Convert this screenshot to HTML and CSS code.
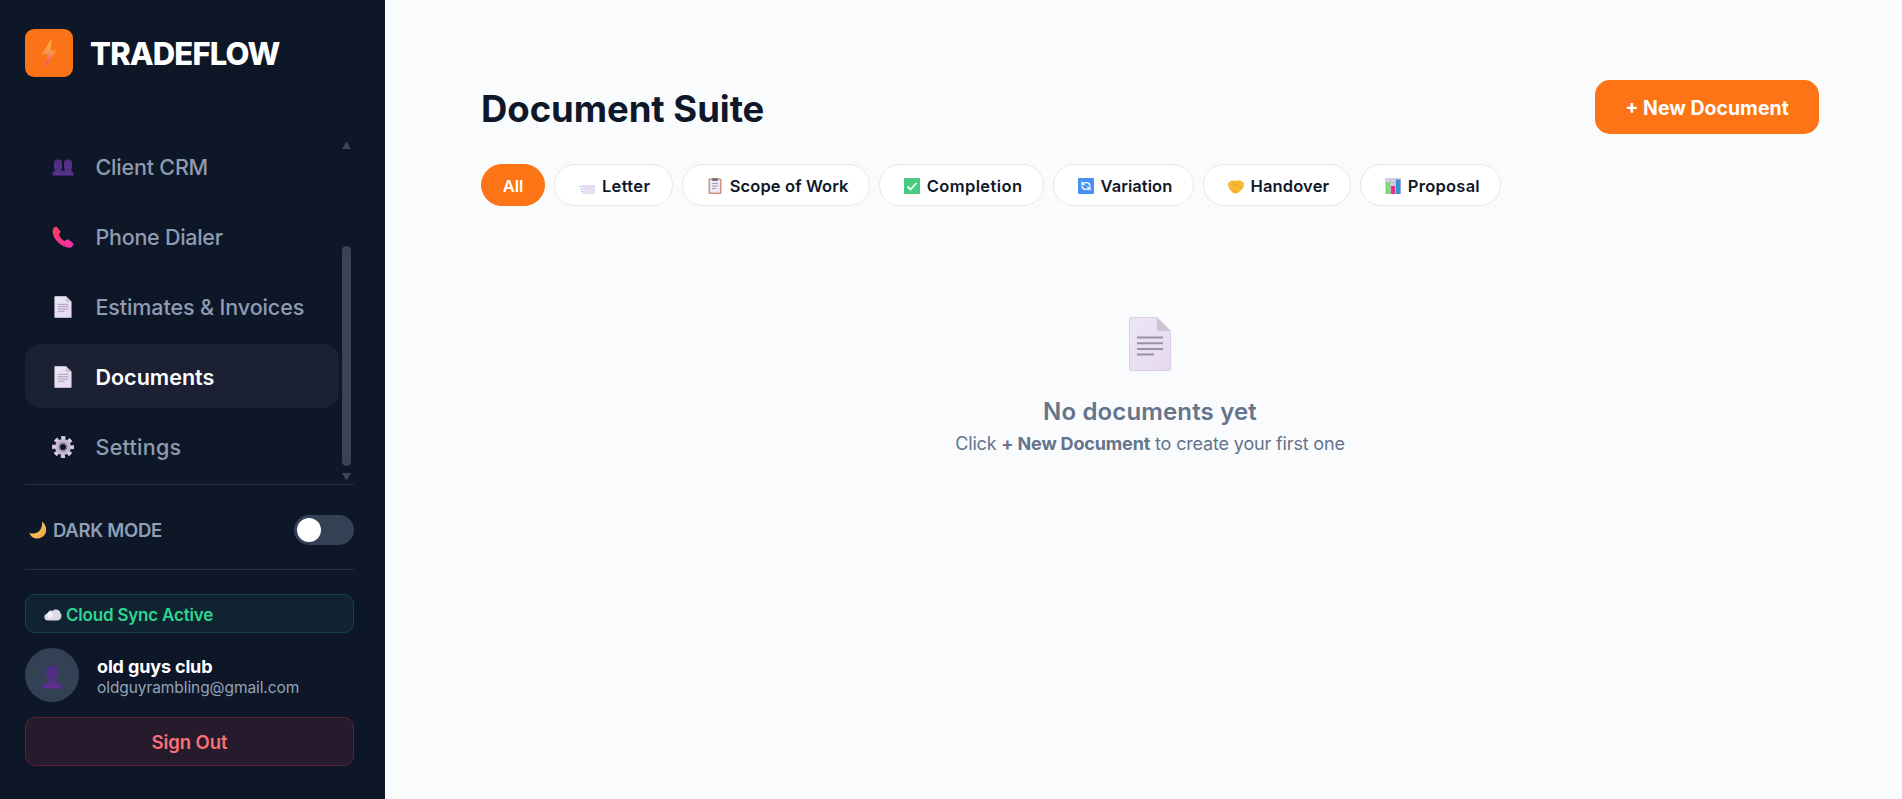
FILE: index.html
```html
<!DOCTYPE html>
<html lang="en">
<head>
    <meta charset="UTF-8">
    <title>TradeFlow - Document Suite</title>
    <link rel="stylesheet" href="styles.css">
</head>
<body>
    <!-- Shared icons -->
    <svg class="sprite" width="0" height="0">
        <defs>
            <linearGradient id="paper" x1="0" y1="0" x2="1" y2="1">
                <stop offset="0" stop-color="#ece7f6"/>
                <stop offset="1" stop-color="#e6d8f0"/>
            </linearGradient>
            <linearGradient id="bolt" x1="0" y1="0" x2="0" y2="1">
                <stop offset="0" stop-color="#ffc531"/>
                <stop offset="0.5" stop-color="#f98f50"/>
                <stop offset="1" stop-color="#f0406e"/>
            </linearGradient>
            <linearGradient id="phone" x1="0" y1="0" x2="1" y2="1">
                <stop offset="0" stop-color="#ff3d55"/>
                <stop offset="1" stop-color="#f02fae"/>
            </linearGradient>
            <linearGradient id="person" x1="0" y1="0" x2="0" y2="1">
                <stop offset="0" stop-color="#4a2f7d"/>
                <stop offset="1" stop-color="#5d2f92"/>
            </linearGradient>
            <linearGradient id="moon" x1="0" y1="0" x2="1" y2="1">
                <stop offset="0" stop-color="#ffd75e"/>
                <stop offset="1" stop-color="#f0a04a"/>
            </linearGradient>
        </defs>
        <symbol id="i-doc" viewBox="0 0 42 54">
            <path d="M2 0.5H28L41.5 14V52a1.5 1.5 0 0 1-1.5 1.5H2A1.5 1.5 0 0 1 .5 52V2A1.5 1.5 0 0 1 2 .5z" fill="url(#paper)" stroke="#d9cde9" stroke-width="1"/>
            <path d="M28 .5L41.5 14H28z" fill="#c9c5cf"/>
            <path d="M8 20.5H34M8 26.2H34M8 32H34M8 37.5H25" stroke="#9a8fa6" stroke-width="2"/>
        </symbol>
    </svg>

    <aside class="sidebar">
        <div class="brand">
            <div class="brand-icon">
                <svg width="16" height="28" viewBox="0 0 16 28"><path d="M10.5 0L0.5 15.5H6.5L4.5 28L15.5 11.5H9.5z" fill="url(#bolt)"/></svg>
            </div>
            <span class="brand-name">TRADEFLOW</span>
        </div>

        <div class="nav-wrap">
            <nav class="nav">
                <a class="nav-item nav-crm">
                    <svg class="nav-icon" viewBox="0 0 22 22">
                        <g fill="url(#person)">
                            <rect x="2" y="3.5" width="8" height="11" rx="3.5"/><rect x="12" y="3.5" width="8" height="11" rx="3.5"/>
                            <path d="M0.5 19.5c0-4 2-5 4-5.5V12h4v2c1.5.3 2 .8 2.5 1.5c.5-.7 1-1.2 2.5-1.5V12h4v2c2.5.5 4 1.500 4 5.500z"/>
                        </g>
                    </svg>
                    <span>Client CRM</span>
                </a>
                <a class="nav-item nav-phone">
                    <svg class="nav-icon" viewBox="0 0 22 22"><path d="M1 3C2 1 4 .3 5 1L8.5 5.5C9 6.5 7 8 7 9C8 11.5 10 13.8 12.5 15C13.5 15 15 13 16 13.3L21 17C22 18 21 20 19 21.5C11 23-1.5 12.5 1 3z" fill="url(#phone)"/></svg>
                    <span>Phone Dialer</span>
                </a>
                <a class="nav-item nav-estimates">
                    <svg class="nav-icon"><use href="#i-doc"/></svg>
                    <span>Estimates &amp; Invoices</span>
                </a>
                <a class="nav-item nav-docs active">
                    <svg class="nav-icon"><use href="#i-doc"/></svg>
                    <span>Documents</span>
                </a>
                <a class="nav-item nav-settings">
                    <svg class="nav-icon" viewBox="0 0 22 22">
                        <circle cx="11" cy="11" r="5.6" fill="none" stroke="#c4b6d4" stroke-width="5"/>
                        <circle cx="11" cy="11" r="9.2" fill="none" stroke="#d8cde4" stroke-width="3.4" stroke-dasharray="4.1 3.126" stroke-dashoffset="2.05"/>
                        <circle cx="11" cy="11" r="4" fill="none" stroke="#8f7fa6" stroke-width="1.4"/>
                    </svg>
                    <span>Settings</span>
                </a>
            </nav>
            <div class="scrollbar">
                <span class="arrow-up"></span>
                <span class="thumb"></span>
                <span class="arrow-down"></span>
            </div>
        </div>

        <div class="dark-mode">
            <svg width="18" height="18" viewBox="0 0 18 18"><path d="M13 0.5C20 6 18 17 8.5 17.5C4.5 17.5 1.5 15.5 .5 12C8 14.5 14 9 13 .5z" fill="url(#moon)"/></svg>
            <span class="dark-label">DARK MODE</span>
            <div class="toggle"><span class="knob"></span></div>
        </div>

        <div class="sync">
            <svg width="18" height="12" viewBox="0 0 18 12">
                <path d="M4 11.5C-.8 11.5-.8 5 3.5 4.5C4.5 1.5 7 1 8.5 2C11 -.5 16 .5 16.5 4C19 7.5 16.5 11.5 13 11.5z" fill="#dcd8e8"/>
                <circle cx="6" cy="6" r="3" fill="#f4f2f8"/>
            </svg>
            <span class="sync-label">Cloud Sync Active</span>
        </div>

        <div class="user">
            <div class="avatar">
                <svg width="22" height="24" viewBox="0 0 22 24"><path d="M11 0.5C15 .5 17 3 17 6.5C18.5 7 18 10 16.5 10C16 12 15 13.5 14 14.5V17C19 18 21.5 20 21.5 23.5H.5C.5 20 3 18 8 17V14.5C7 13.5 6 12 5.5 10C4 10 3.5 7 5 6.5C5 3 7 .5 11 .5z" fill="url(#person)"/></svg>
            </div>
            <div class="user-info">
                <div class="user-name">old guys club</div>
                <div class="user-email">oldguyrambling@gmail.com</div>
            </div>
        </div>

        <button class="sign-out">Sign Out</button>
    </aside>

    <!-- Documents page -->
    <main class="main">
        <header class="page-head">
            <h1>Document Suite</h1>
            <button class="btn-new">+ New Document</button>
        </header>

        <div class="filters">
            <button class="pill pill-on">All</button>
            <button class="pill p-letter">
                <svg width="16" height="16" viewBox="0 0 16 16"><path d="M0 8.5H5M1 11H5M2 13.5H5" stroke="#8fd9f5" stroke-width="1"/><rect x="3.5" y="7" width="12.5" height="9" rx=".5" fill="#e7dff2"/><path d="M3.5 7l6 4.5l6-4.5" fill="none" stroke="#d9cbe8" stroke-width=".8"/></svg>
                <span>Letter</span>
            </button>
            <button class="pill p-scope">
                <svg width="16" height="16" viewBox="0 0 16 16"><rect x="1.5" y="0.5" width="13" height="15.5" rx="1" fill="#cf967f"/><rect x="3" y="2" width="10" height="12.5" fill="#eee8f6"/><rect x="5" y="0" width="6" height="3" rx="1" fill="#7c7585"/><path d="M5 5.5h6M5 8h6M5 10.5h4" stroke="#a79cb5"/></svg>
                <span>Scope of Work</span>
            </button>
            <button class="pill p-comp">
                <svg width="16" height="16" viewBox="0 0 16 16"><rect width="16" height="16" rx="1" fill="#46cb80"/><path d="M3.5 8.5l3 3l6-6.5" fill="none" stroke="#fff" stroke-width="1.8"/></svg>
                <span>Completion</span>
            </button>
            <button class="pill p-var">
                <svg width="16" height="16" viewBox="0 0 16 16"><rect width="16" height="16" rx="1" fill="#4791f5"/><path d="M5 4.8H9A2.8 2.8 0 0 1 11.8 8M11 11.2H7A2.8 2.8 0 0 1 4.2 8" fill="none" stroke="#eaf1fd" stroke-width="1.6"/><path d="M3.3 3v4.2H7.5zM12.7 13V8.800H8.500z" fill="#eaf1fd"/></svg>
                <span>Variation</span>
            </button>
            <button class="pill p-hand">
                <svg width="16" height="16" viewBox="0 0 16 16"><path d="M0 6C1 3 4 1.5 7 3C10 1.5 14 2 16 5.5C16.5 9 13 13 9.5 15C7.5 16 5 15.5 4 14C1.5 12 0 9 0 6z" fill="#fbb932"/><path d="M7 3C5 5 5 7 7 7.5L10 6.5L14 11M6 14l-1.5-3M9 14.5L7 11.5" fill="none" stroke="#e3912a" stroke-width=".7"/></svg>
                <span>Handover</span>
            </button>
            <button class="pill p-prop">
                <svg width="16" height="16" viewBox="0 0 16 16"><rect width="16" height="16" fill="#d6cfe0"/><path d="M0 4.5h16M0 8.5h16M5.5 0v16M10.5 0v16" stroke="#b9b0c6" stroke-width=".6"/><rect x="1" y="4" width="4" height="12" fill="#7ddb72"/><rect x="6" y="8" width="4" height="8" fill="#e8337a"/><rect x="11" y="1.5" width="4.5" height="14.5" fill="#3a8fd8"/></svg>
                <span>Proposal</span>
            </button>
        </div>

        <section class="empty">
            <svg class="empty-icon"><use href="#i-doc"/></svg>
            <h2>No documents yet</h2>
            <p>Click <b>+ New Document</b> to create your first one</p>
        </section>
    </main>
</body>
</html>
```
FILE: styles.css
```css
* {
    box-sizing: border-box;
}

body {
    margin: 0;
    height: 799px;
    display: flex;
    overflow: hidden;
    font-family: Inter, "Liberation Sans", sans-serif;
    background: #f9fbfd;
    color: #0f172a;
}

button {
    font-family: inherit;
    cursor: pointer;
}

span {
    white-space: nowrap;
}

.sprite {
    position: absolute;
}

/* Sidebar */
.sidebar {
    width: 385px;
    flex-shrink: 0;
    padding: 29px 31px 33px 25px;
    display: flex;
    flex-direction: column;
    background: #0e1728;
}

.brand {
    display: flex;
    align-items: center;
    gap: 17px;
    height: 48px;
    margin-bottom: 57px;
}

.brand-icon {
    width: 48px;
    height: 48px;
    border-radius: 9px;
    background: #fb7316;
    display: flex;
    align-items: center;
    justify-content: center;
}

.brand-name {
    font-size: 31px;
    font-weight: 800;
    letter-spacing: -0.85px;
    color: #fff;
}

.nav-wrap {
    display: flex;
    height: 351px;
    border-bottom: 1px solid #263043;
}

.nav {
    flex: 1;
    display: flex;
    flex-direction: column;
    gap: 6px;
}

.nav-item {
    display: flex;
    align-items: center;
    gap: 21.5px;
    height: 64px;
    padding-left: 27px;
    padding-top: 2px;
    border-radius: 15px;
    font-size: 21.5px;
    font-weight: 500;
    color: #8e9bb0;
}

.nav-item.active {
    background: #1b2032;
    color: #fff;
    font-weight: 600;
}

.nav-crm { letter-spacing: -0.2px; }
.nav-phone { letter-spacing: -0.27px; }
.nav-estimates { letter-spacing: -0.11px; }
.nav-settings { letter-spacing: 0.25px; }

.nav-icon {
    width: 22px;
    height: 22px;
}

.scrollbar {
    width: 15px;
    padding: 8px 3px 3px;
    display: flex;
    flex-direction: column;
}

.arrow-up {
    border: 4.5px solid transparent;
    border-top: 0;
    border-bottom: 7px solid #3b4455;
}

.arrow-down {
    border: 4.5px solid transparent;
    border-bottom: 0;
    border-top: 7px solid #3b4455;
}

.thumb {
    height: 220px;
    margin: 97px 0 7px;
    border-radius: 5px;
    background: #3b4353;
}

.dark-mode {
    display: flex;
    align-items: center;
    height: 85px;
    padding-left: 4px;
    padding-top: 6px;
    border-bottom: 1px solid #263043;
}

.dark-label {
    margin-left: 6px;
    font-size: 18.5px;
    font-weight: 600;
    letter-spacing: -0.3px;
    color: #8e9fb7;
}

.toggle {
    width: 60px;
    height: 30px;
    margin-left: auto;
    padding: 3px;
    border-radius: 15px;
    background: #334155;
}

.knob {
    display: block;
    width: 24px;
    height: 24px;
    border-radius: 50%;
    background: #fff;
}

.sync {
    display: flex;
    align-items: center;
    gap: 4px;
    height: 39px;
    margin: 24px 0 15px;
    padding-left: 18px;
    padding-top: 3px;
    border: 1px solid #10483f;
    border-radius: 10px;
    background: #0f2430;
}

.sync-label {
    font-size: 17px;
    font-weight: 600;
    letter-spacing: -0.2px;
    color: #2fd592;
}

.user {
    display: flex;
    align-items: center;
    gap: 18px;
    height: 54px;
    margin-bottom: 15px;
}

.avatar {
    width: 54px;
    height: 54px;
    border-radius: 50%;
    background: #334155;
    display: flex;
    align-items: center;
    justify-content: center;
}

.avatar svg {
    margin-top: 3px;
}

.user-info {
    padding-top: 2px;
}

.user-name {
    font-size: 18px;
    line-height: 22px;
    font-weight: 700;
    letter-spacing: -0.15px;
    color: #fff;
}

.user-email {
    font-size: 15.5px;
    line-height: 19px;
    letter-spacing: -0.08px;
    color: #94a3b8;
}

.sign-out {
    height: 49px;
    padding: 1px 0 0;
    border: 1px solid #5c2232;
    border-radius: 10px;
    background: #251b2c;
    font-size: 18.5px;
    font-weight: 600;
    letter-spacing: -0.05px;
    color: #fb7074;
}

/* Documents page */
.main {
    flex: 1;
    padding: 80px 83px 0 96px;
}

.page-head {
    display: flex;
    align-items: center;
    justify-content: space-between;
    height: 54px;
    margin-bottom: 30px;
}

h1 {
    margin: 0;
    padding-top: 3px;
    font-size: 36.5px;
    font-weight: 700;
    letter-spacing: -0.05px;
}

.btn-new {
    width: 224px;
    height: 54px;
    padding: 2px 0 0;
    border: 0;
    border-radius: 15px;
    background: #fc7415;
    color: #fff;
    font-size: 19.5px;
    font-weight: 700;
}

.filters {
    display: flex;
    gap: 9.4px;
}

.pill {
    display: flex;
    align-items: center;
    gap: 6.5px;
    height: 42px;
    padding: 2px 0 0 24px;
    border: 1px solid #e4e9ef;
    border-radius: 21px;
    background: #fff;
    color: #0f172a;
    font-size: 16.5px;
    font-weight: 600;
}

.pill-on {
    width: 64px;
    justify-content: center;
    padding-left: 0;
    border-color: #fc7415;
    background: #fc7415;
    color: #fff;
}

.p-letter { width: 118.5px; letter-spacing: 0.35px; }
.p-scope { width: 187.5px; letter-spacing: 0.1px; }
.p-comp { width: 164.5px; letter-spacing: 0.4px; }
.p-var { width: 140.5px; letter-spacing: 0.05px; }
.p-hand { width: 148px; letter-spacing: 0.15px; }
.p-prop { width: 141px; letter-spacing: 0.25px; }

.empty {
    display: flex;
    flex-direction: column;
    align-items: center;
    padding-top: 111px;
    color: #64748b;
}

.empty-icon {
    width: 42px;
    height: 54px;
}

.empty h2 {
    margin: 25px 0 0;
    font-size: 24px;
    line-height: 32px;
    font-weight: 600;
    letter-spacing: 0.15px;
}

.empty p {
    margin: 3px 0 0;
    font-size: 18px;
    line-height: 26px;
    letter-spacing: -0.16px;
}
```
